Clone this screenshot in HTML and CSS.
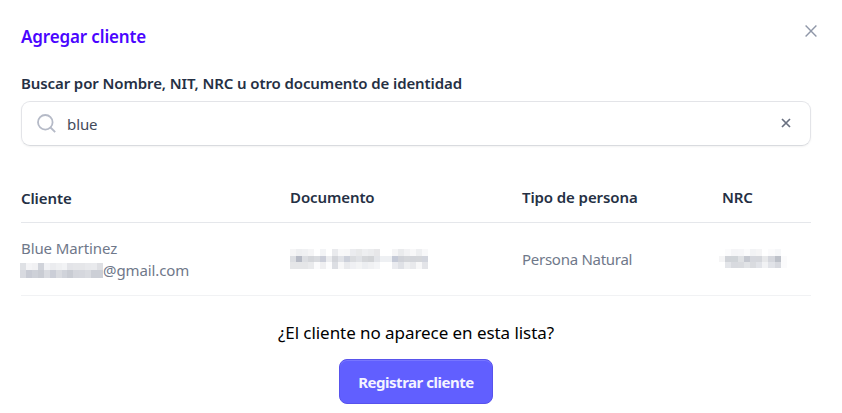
FILE: index.html
```html
<!DOCTYPE html>
<html lang="es">
<head>
<meta charset="utf-8">
<title>Agregar cliente</title>
<link rel="stylesheet" href="styles.css">
</head>
<body>
<main class="dialog">
  <header class="dialog-header">
    <h1 class="title">Agregar cliente</h1>
    <button class="close" aria-label="Cerrar"><svg width="12" height="12" viewBox="0 0 12 12"><path d="M.6.6l10.8 10.8M11.4.6L.6 11.4"/></svg></button>
  </header>
  <label class="label" for="search">Buscar por Nombre, NIT, NRC u otro documento de identidad</label>
  <div class="search">
    <svg class="search-icon" width="20" height="20" viewBox="0 0 20 20"><circle cx="8.3" cy="8.3" r="7.3"/><path d="M13.5 13.5l4.7 4.7"/></svg>
    <input id="search" class="search-input" type="text" value="blue">
    <button class="clear" aria-label="Limpiar"><svg width="10" height="10" viewBox="0 0 10 10"><path d="M1 1l8 8M9 1L1 9"/></svg></button>
  </div>
  <section class="table">
    <div class="row head">
      <span class="head-client">Cliente</span><span>Documento</span><span>Tipo de persona</span><span>NRC</span>
    </div>
    <div class="row body">
      <div class="client"><span class="name">Blue Martinez</span><span class="email"><svg class="mosaic" data-mosaic="mail" width="83" height="15"></svg><span>@gmail.com</span></span></div>
      <svg class="mosaic" data-mosaic="doc" width="138" height="20"></svg>
      <span class="person">Persona Natural</span>
      <svg class="mosaic nrc" data-mosaic="nrc" width="68" height="19"></svg>
    </div>
  </section>
  <footer class="footer">
    <p class="question">¿El cliente no aparece en esta lista?</p>
    <button class="register">Registrar cliente</button>
  </footer>
</main>
<script src="mosaic.js"></script>
</body>
</html>
```
FILE: mosaic.js
```js
// Each row lists the grey level of consecutive cells.
const mosaics = {
  mail: { heights: [7, 8], rows: [
    "dfe1e5 f4f4f6 f1f1f3 d0d3da f1f2f5 ebecef eff0f2 f2f3f5 e3e4e8 e5e6e9 e5e6e9 e8e9ec e9eaed dedfe3",
    "d8dae0 c8cbd4 ced1d8 c9ccd3 d9dbe0 cbced7 d9dbe0 d0d3da c9ccd3 d4d6dc d5d7dd d9dbe0 cccfd6 cccfd6"] },
  doc: { heights: [7, 6, 7], rows: [
    "f5f5f6 eeeff1 f0f1f3 f5f5f6 ffffff f3f4f6 ffffff e9eaed f8f8f9 f7f7f8 ebecef e8e9ea eeeff1 ebecee e7e7e9 ffffff ffffff f5f5f6 eaebed f2f2f4 f8f8f9 eeeff1 f8f8f9",
    "dcdee2 b6bac5 dcdee2 d4d6da d9dbdf cbced9 ebecef d3d5da e0e2e7 ccd0da dadcdf e0e2e6 d5d7da d2d4d7 e3e5e9 eef0f3 eef0f3 c5cad7 d0d2d8 d4d6da d3d5da d4d6da d2d5dd",
    "e5e6e8 e5e6e8 e5e6e8 e9eaec fbfbfc efeff1 fcfcfd dcdee3 f7f7f8 e9eaed eff0f3 f3f4f5 eceef1 f0f1f3 f4f5f7 ffffff ffffff eaebef dfe1e6 eeeff1 e8e9ec f7f7f8 e3e4e8"] },
  nrc: { heights: [7, 6, 6], rows: [
    "ffffff fbfbfc f5f5f7 f6f6f8 fbfbfc f2f3f5 f5f5f6 ffffff fbfbfc f6f7f9 ffffff",
    "f5f5f6 d0d3d8 d0d4d8 dfe1e4 c5c8d0 d5d7dd d5d7dc e7e8ea d5d7dd bdc1c9 fbfbfc",
    "ffffff e3e5e9 d8dadf d9dbdf e1e3e6 d9dbdf e1e3e8 f1f2f4 e1e3e8 d7d9df fbfbfc"] }
};
document.querySelectorAll("[data-mosaic]").forEach(svg => {
  const { heights, rows } = mosaics[svg.dataset.mosaic];
  const cells = rows[0].split(" ").length;
  // Cell edges snap to whole pixels across the given width.
  const width = Number(svg.getAttribute("width"));
  let y = 0;
  rows.forEach((row, i) => {
    row.split(" ").forEach((color, j) => {
      const x = Math.round(j * width / cells);
      const r = document.createElementNS("http://www.w3.org/2000/svg", "rect");
      r.setAttribute("x", x);
      r.setAttribute("y", y);
      r.setAttribute("width", Math.round((j + 1) * width / cells) - x);
      r.setAttribute("height", heights[i]);
      r.setAttribute("fill", "#" + color);
      svg.append(r);
    });
    y += heights[i];
  });
});
```
FILE: styles.css
```css
* { box-sizing: border-box; }
body { margin: 0; background: #fff; font-family: "Noto Sans", "Open Sans", sans-serif; font-size: 15px; color: #6f788a; }
button { font: inherit; padding: 0; border: 0; background: none; }
svg { display: block; fill: none; }
.dialog { width: 842px; height: 413px; padding: 25px 31px 0 21px; overflow: hidden; }
.dialog-header { display: flex; justify-content: space-between; height: 48px; }
.title { margin: 0; font-size: 17px; line-height: 24px; font-weight: 600; letter-spacing: -.14px; color: #4a05ff; }
.close { width: 12px; height: 12px; margin-right: -6px; }
.close svg { stroke: #8f97a8; stroke-width: 1.4; }
.label { display: block; height: 28px; line-height: 21px; font-weight: 600; letter-spacing: -.1px; color: #253044; }
.search { display: flex; align-items: center; height: 45px; padding: 0 19px 0 15px; border: 1px solid #e3e4e8; border-bottom-color: #d9dbdf; border-radius: 9px; box-shadow: 0 1px 2px rgba(0,0,0,.05); }
.search-icon { stroke: #b5bac7; stroke-width: 1.8; }
.search-input { flex: 1; min-width: 0; margin-left: 10px; padding: 0; border: 0; outline: 0; font: inherit; letter-spacing: -.1px; color: #434b5b; }
.clear { margin-top: -2px; }
.clear svg { stroke: #697080; stroke-width: 1.7; }
.table { margin-top: 28px; }
.row { display: grid; grid-template-columns: 269px 232px 200px 1fr; align-items: center; }
.head { height: 49px; padding-bottom: 2px; border-bottom: 1px solid #e5e7eb; font-weight: 600; letter-spacing: -.1px; color: #253044; }
.head-client { padding-top: 2px; }
.body { height: 73px; border-bottom: 1px solid #f1f2f4; }
.client { display: grid; grid-template-rows: 22px 22px; line-height: 22px; letter-spacing: -.1px; }
.email { display: flex; align-items: center; margin-left: -1px; }
.person { letter-spacing: -.27px; }
.mosaic { shape-rendering: crispEdges; }
.nrc { margin: -2px 0 0 -3px; }
.footer { display: flex; flex-direction: column; align-items: center; padding-top: 24px; }
.question { margin: 0; font-size: 17px; line-height: 26px; letter-spacing: -.06px; color: #000; }
.register { width: 154px; height: 45px; margin-top: 13px; border: 1px solid #5853ec; border-radius: 8px; background: #615fff; color: #f4f3ff; font-weight: 700; letter-spacing: -.47px; box-shadow: inset 0 1px #7775ff; }
```
